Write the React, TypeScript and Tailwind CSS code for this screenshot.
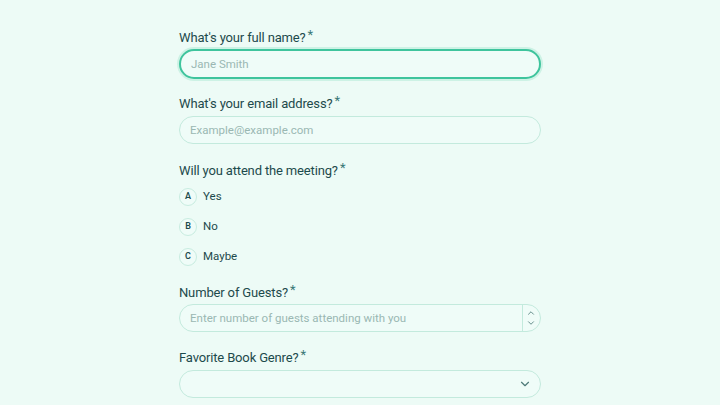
import { ChevronDown, ChevronUp } from "lucide-react";

const Label = ({ text }: { text: string }) => (
  <label className="flex items-start pt-px text-[13px] leading-5 tracking-[-0.15px] text-[#1d4a4c]">
    {text}
    <span className="ml-[2px] -mt-[3px] text-[13px] text-[#3a7877]">*</span>
  </label>
);

const options = [
  { key: "A", label: "Yes" },
  { key: "B", label: "No" },
  { key: "C", label: "Maybe" },
];

export default function App() {
  return (
    <div
      className="min-h-[405px] w-full bg-[#edfbf6] text-[#1d4a4c]"
      style={{ fontFamily: "Roboto, 'Noto Sans', sans-serif" }}
    >
      <div className="mx-auto w-[362px] pt-[27px]">
        {/* full name */}
        <Label text="What's your full name?" />
        <div className="mt-px h-[30px] rounded-full border-2 border-[#3fc49d] bg-[#effcf8] px-[10px] ring-2 ring-[#cdf2e5]">
          <input
            className="h-full w-full bg-transparent text-[11.5px] text-[#1d4a4c] outline-none placeholder:text-[#9ab8b3]"
            placeholder="Jane Smith"
          />
        </div>

        {/* email */}
        <div className="mt-[14px]">
          <Label text="What's your email address?" />
        </div>
        <div className="mt-[2px] h-[28px] rounded-full border border-[#c3eadd] bg-[#effcf8] px-[10px]">
          <input
            className="h-full w-full bg-transparent text-[11.5px] text-[#1d4a4c] outline-none placeholder:text-[#9ab8b3]"
            placeholder="Example@example.com"
          />
        </div>

        {/* meeting */}
        <div className="mt-[16px]">
          <Label text="Will you attend the meeting?" />
        </div>
        <div className="mt-[7px] flex flex-col gap-[12px]">
          {options.map((o) => (
            <div key={o.key} className="flex h-[18px] items-center gap-[6px]">
              <span className="flex h-[18px] w-[18px] items-center justify-center rounded-full border border-[#c8ece0] bg-[#effcf8] text-[9px] font-semibold text-[#1d4a4c]">
                {o.key}
              </span>
              <span className="text-[11.5px] text-[#1d4a4c]">{o.label}</span>
            </div>
          ))}
        </div>

        {/* guests */}
        <div className="mt-[16px]">
          <Label text="Number of Guests?" />
        </div>
        <div className="mt-px flex h-[28px] items-stretch rounded-full border border-[#c3eadd] bg-[#effcf8]">
          <input
            className="h-full flex-1 bg-transparent px-[10px] text-[11.5px] text-[#1d4a4c] outline-none placeholder:text-[#9ab8b3]"
            placeholder="Enter number of guests attending with you"
          />
          <div className="flex w-[18px] flex-col items-center justify-center border-l border-[#c3eadd] pr-[2px] text-[#4d7a78]">
            <ChevronUp size={10} strokeWidth={2} />
            <ChevronDown size={10} strokeWidth={2} />
          </div>
        </div>

        {/* genre */}
        <div className="mt-[15px]">
          <Label text="Favorite Book Genre?" />
        </div>
        <div className="mt-[2px] flex h-[28px] items-center justify-end rounded-full border border-[#c3eadd] bg-[#effcf8] pr-[8px] text-[#4d7a78]">
          <ChevronDown size={14} strokeWidth={2} />
        </div>
      </div>
    </div>
  );
}
